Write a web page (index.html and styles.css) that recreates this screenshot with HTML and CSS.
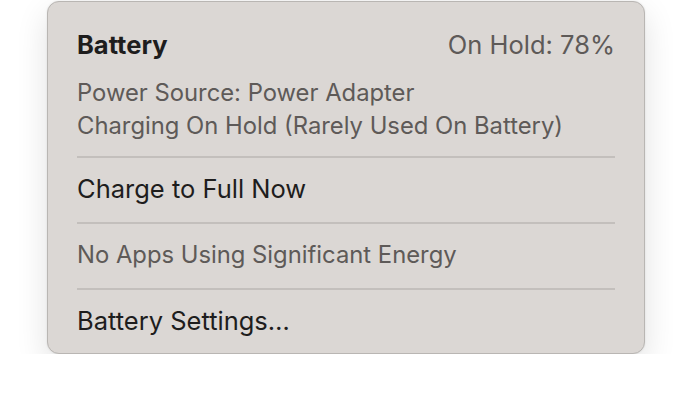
FILE: index.html
```html
<!DOCTYPE html>
<html>
<head>
<meta charset="utf-8">
<link rel="stylesheet" href="styles.css">
</head>
<body>
<div class="menu">
  <div class="header">
    <span class="title">Battery</span>
    <span class="status">On Hold: 78%</span>
  </div>
  <div class="info">
    <div class="line">Power Source: Power Adapter</div>
    <div class="line">Charging On Hold (Rarely Used On Battery)</div>
  </div>
  <div class="sep"></div>
  <div class="item">Charge to Full Now</div>
  <div class="sep"></div>
  <div class="item muted">No Apps Using Significant Energy</div>
  <div class="sep"></div>
  <div class="item">Battery Settings…</div>
</div>
</body>
</html>
```
FILE: styles.css
```css
html, body {
  margin: 0;
  padding: 0;
  background: #ffffff;
}
body {
  font-family: Inter, "Noto Sans", "Liberation Sans", sans-serif;
  font-size: 25.5px;
  color: #1e1d1d;
}
.menu {
  box-sizing: border-box;
  margin: 1px 0 0 47px;
  width: 598px;
  height: 353px;
  background: #dbd7d4;
  border: 1px solid #b9b6b3;
  border-radius: 12px;
  padding: 27px 29px 0 29px;
  box-shadow: 0 12px 32px rgba(0, 0, 0, 0.12), 0 0 2px rgba(0, 0, 0, 0.1);
}
.header {
  display: flex;
  justify-content: space-between;
  line-height: 32px;
}
.title {
  font-weight: 700;
  color: #1e1d1d;
}
.status {
  color: #5e5a58;
}
.info {
  margin-top: 15px;
  font-size: 23.8px;
  color: #5e5a58;
  line-height: 33px;
  padding-bottom: 14px;
}
.sep {
  height: 2px;
  background: #c3bfbc;
}
.item {
  line-height: 32px;
  padding: 15px 0 17px;
}
.muted {
  font-size: 23.8px;
  color: #5e5a58;
}
```
